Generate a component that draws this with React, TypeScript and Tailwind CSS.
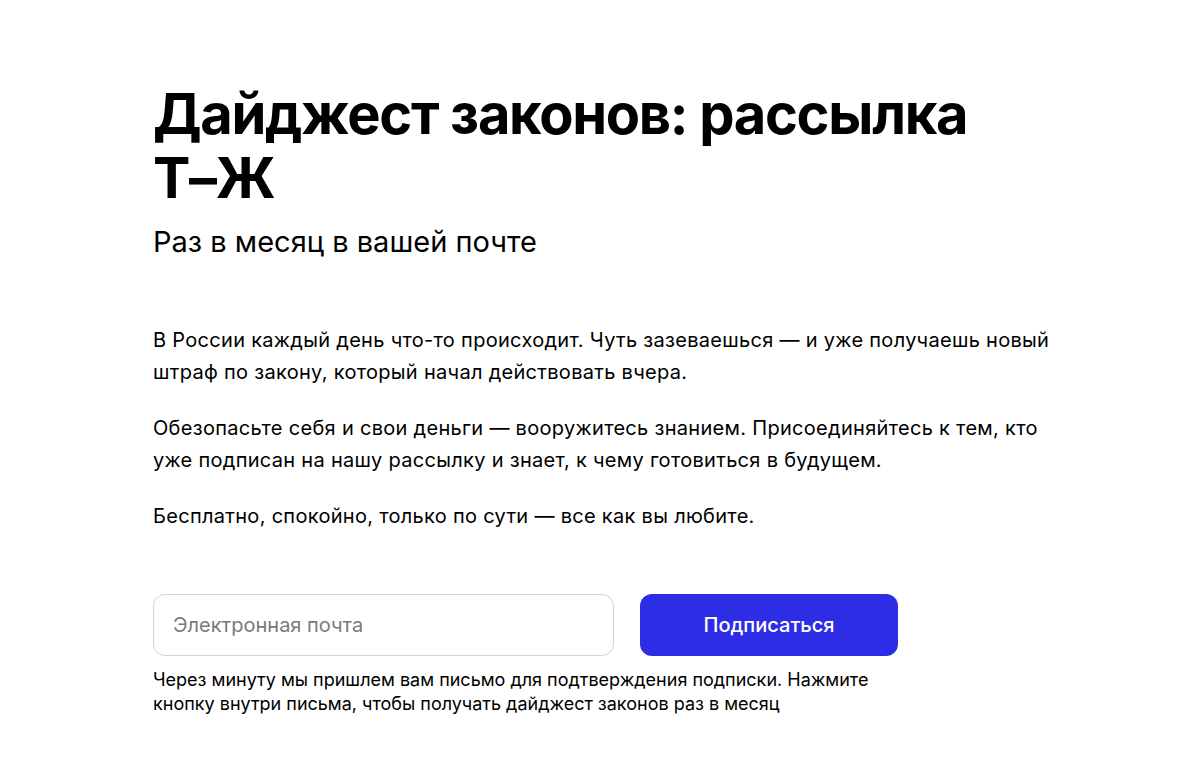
export default function App() {
  return (
    <div className="min-h-screen bg-white font-['Inter',sans-serif] text-black">
      <div className="mx-auto w-[897px] pt-[82px]">
        <h1 className="text-[56px] font-bold leading-[64px] tracking-[-1.3px]">
          Дайджест законов: рассылка <span className="whitespace-nowrap">Т–Ж</span>
        </h1>
        <p className="mt-[14px] text-[29px] leading-[36px]">Раз в месяц в вашей почте</p>

        <div className="mt-[64px] flex w-[915px] flex-col gap-6 text-[20px] leading-[32px] tracking-[0.3px]">
          <p>
            В России каждый день что-то происходит. Чуть зазеваешься — и уже получаешь новый
            штраф по закону, который начал действовать вчера.
          </p>
          <p>
            Обезопасьте себя и свои деньги — вооружитесь знанием. Присоединяйтесь к тем, кто
            уже подписан на нашу рассылку и знает, к чему готовиться в будущем.
          </p>
          <p>Бесплатно, спокойно, только по сути — все как вы любите.</p>
        </div>

        <form className="mt-[62px] flex gap-[26px]" onSubmit={(e) => e.preventDefault()}>
          <input
            type="email"
            placeholder="Электронная почта"
            className="h-[62px] w-[461px] rounded-xl border border-[#d4d4d4] px-[19px] text-[20px] text-black outline-none placeholder:text-[#7a7a7a]"
          />
          <button
            type="submit"
            className="h-[62px] w-[258px] rounded-xl bg-[#2d2de6] text-[20px] font-medium text-white"
          >
            Подписаться
          </button>
        </form>
        <p className="mt-[12px] w-[745px] text-[18px] leading-[24px]">
          Через минуту мы пришлем вам письмо для подтверждения подписки. Нажмите кнопку внутри
          письма, чтобы получать дайджест законов раз в месяц
        </p>
      </div>
    </div>
  );
}
